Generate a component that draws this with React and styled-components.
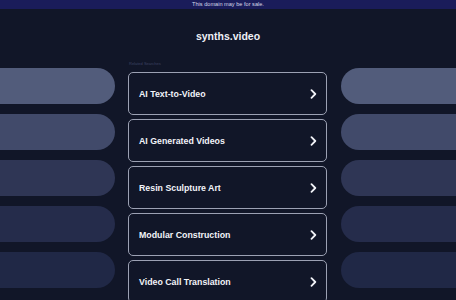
import React from "react";
import styled, { createGlobalStyle } from "styled-components";

const Global = createGlobalStyle`
  html, body { margin: 0; padding: 0; background: #111628; }
  body { font-family: "Liberation Sans", Arial, sans-serif; overflow: hidden; }
`;

const Page = styled.div`
  width: 456px;
  height: 300px;
  background: #111628;
  overflow: hidden;
`;

const TopBar = styled.div`
  height: 9px;
  background: #1a1c5a;
  color: #d8dae8;
  font-size: 5.6px;
  line-height: 9px;
  text-align: center;
`;

const Header = styled.div`
  height: 51px;
  box-sizing: border-box;
  padding-top: 21px;
  text-align: center;
`;

const Title = styled.h1`
  margin: 0;
  color: #eef0f6;
  font-size: 10.5px;
  line-height: 12px;
  font-weight: 700;
`;

const Main = styled.div`
  display: grid;
  grid-template-columns: 115px 199px 1fr;
  column-gap: 13px;
`;

const SideColumn = styled.div`
  display: flex;
  flex-direction: column;
  gap: 10px;
  padding-top: 8px;
  padding-left: ${(p) => (p.$right ? "1px" : "0")};
`;

const Pill = styled.div`
  height: 36px;
  background: ${(p) => p.$color};
  border-radius: ${(p) => (p.$right ? "18px 0 0 18px" : "0 18px 18px 0")};
`;

const Center = styled.div`
  display: flex;
  flex-direction: column;
`;

const Label = styled.div`
  height: 12px;
  padding-top: 1px;
  box-sizing: border-box;
  font-size: 4px;
  color: #3c4363;
  padding-left: 1px;
`;

const Cards = styled.div`
  display: flex;
  flex-direction: column;
  gap: 4px;
`;

const Card = styled.a`
  height: 43px;
  box-sizing: border-box;
  border: 1px solid #9ca1b3;
  border-radius: 5px;
  display: flex;
  align-items: center;
  justify-content: space-between;
  padding: 0 9px 0 10px;
  color: #f2f3f8;
  font-size: 8.8px;
  font-weight: 700;
  text-decoration: none;
`;

const Chevron = () => (
  <svg width="7" height="10" viewBox="0 0 7 10" fill="none">
    <path d="M1.5 1.2 L5.3 5 L1.5 8.8" stroke="#f2f3f8" strokeWidth="1.8" strokeLinecap="round" strokeLinejoin="round" />
  </svg>
);

const colors = ["#525c7b", "#414a6a", "#2f3655", "#252c4b", "#202846"];
const items = [
  "AI Text-to-Video",
  "AI Generated Videos",
  "Resin Sculpture Art",
  "Modular Construction",
  "Video Call Translation",
];

export default function App() {
  return (
    <Page>
      <Global />
      <TopBar>This domain may be for sale.</TopBar>
      <Header>
        <Title>synths.video</Title>
      </Header>
      <Main>
        <SideColumn>
          {colors.map((c) => (
            <Pill key={c} $color={c} />
          ))}
        </SideColumn>
        <Center>
          <Label>Related Searches</Label>
          <Cards>
            {items.map((t) => (
              <Card key={t} href="#">
                <span>{t}</span>
                <Chevron />
              </Card>
            ))}
          </Cards>
        </Center>
        <SideColumn $right>
          {colors.map((c) => (
            <Pill key={c} $color={c} $right />
          ))}
        </SideColumn>
      </Main>
    </Page>
  );
}
